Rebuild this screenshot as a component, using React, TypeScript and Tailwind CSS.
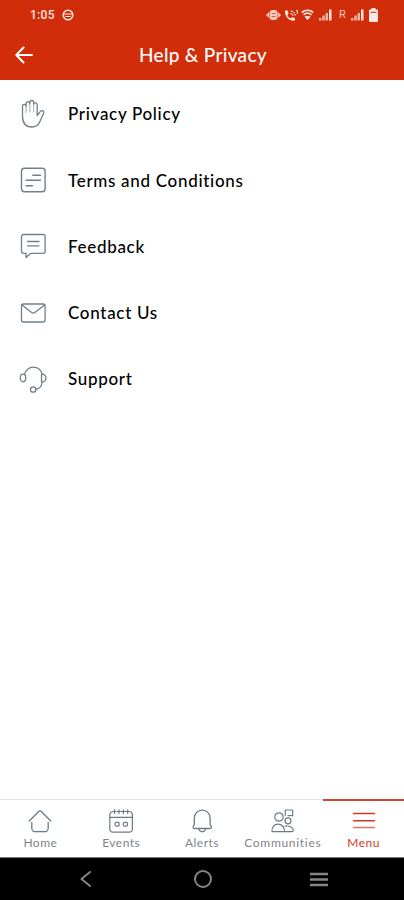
import type { ReactNode } from 'react';
import { clsx } from 'clsx';

interface MenuEntry {
  label: string;
  tracking: string;
  icon: ReactNode;
}

interface TabEntry {
  label: string;
  tracking: string;
  icon: ReactNode;
  active?: boolean;
}

const iconProps = {
  fill: 'none',
  stroke: 'currentColor',
  strokeLinecap: 'round',
  strokeLinejoin: 'round',
} as const;

function HandIcon() {
  return (
    <svg {...iconProps} viewBox="0 0 30 30" strokeWidth="1.3" className="size-[30px]">
      <path d="M4.5 17V7.2a1.8 1.8 0 0 1 3.6 0V4.8a1.9 1.9 0 0 1 3.8 0V3.4a1.9 1.9 0 0 1 3.8 0v1.8a1.8 1.8 0 0 1 3.5 0v11.3l3.2-4.1c1.4-1.5 4-.4 3.3 1.5l-4 9.1C20 27 17 28 13.8 28 8 28 4.500 24 4.500 17Z" />
      <path d="M8.100 7v6.500M11.900 5v8M15.700 5v8" strokeWidth="0.9" opacity="0.7" />
    </svg>
  );
}

function TermsIcon() {
  return (
    <svg {...iconProps} viewBox="0 0 30 30" strokeWidth="1.4" className="size-[30px]">
      <rect x="3.500" y="3.200" width="23.600" height="23.600" rx="3" />
      <path d="M14.800 10.300h7.700M8 15.300h14.500M8 20.700h6.500" />
    </svg>
  );
}

function FeedbackIcon() {
  return (
    <svg {...iconProps} viewBox="0 0 30 30" strokeWidth="1.3" className="size-[30px]">
      <path d="M5.500 3.500h19.600a2 2 0 0 1 2 2v14.800a2 2 0 0 1-2 2H12.800L8 26.500v-4.200H5.500a2 2 0 0 1-2-2V5.500a2 2 0 0 1 2-2Z" />
      <path d="M9.500 10.500h11.500M9.500 14.800h11.500" />
    </svg>
  );
}

function MailIcon() {
  return (
    <svg {...iconProps} viewBox="0 0 30 30" strokeWidth="1.3" className="size-[30px]">
      <rect x="3.500" y="6" width="23.600" height="18" rx="2" />
      <path d="m4 7 9.600 7.500a2.700 2.700 0 0 0 3.300 0L26.600 7" />
    </svg>
  );
}

function HeadsetIcon() {
  return (
    <svg {...iconProps} viewBox="0 0 30 30" strokeWidth="1.3" className="size-[30px]">
      <path d="M6.500 10.500C7.500 6.500 11 3.200 15.300 3.200s7.800 3 9 7.300" />
      <ellipse cx="5" cy="14" rx="2.700" ry="3.800" />
      <path d="M23.500 10.300c2.500-.5 4.500 1.200 4.500 3.800s-2 4.200-4.500 3.800Z" />
      <path d="M24.200 18c-.4 3.500-2.500 6.700-6 7.400" />
      <circle cx="15.200" cy="25.500" r="2.700" />
    </svg>
  );
}

function HomeIcon() {
  return (
    <svg {...iconProps} viewBox="0 0 26 26" strokeWidth="1.3" className="size-[26px]">
      <path d="M2.200 13 11.700 3.500a1.800 1.800 0 0 1 2.600 0L23.800 13" />
      <path d="M4.800 14.500v5.700a3.500 3.500 0 0 0 3.500 3.500h9.400a3.500 3.500 0 0 0 3.500-3.500v-5.700" />
    </svg>
  );
}

function CalendarIcon() {
  return (
    <svg {...iconProps} viewBox="0 0 26 26" strokeWidth="1.200" className="size-[26px]">
      <rect x="1.800" y="3.500" width="22.600" height="20.700" rx="3.500" />
      <path d="M2 9.300h22.300M6.500 1.800v3.800M11 1.800v3.800M15.300 1.800v3.800M19.700 1.800v3.800" />
      <rect x="7" y="14.300" width="4.200" height="3.800" rx="1.400" />
      <rect x="15.300" y="14.300" width="4.200" height="3.800" rx="1.400" />
    </svg>
  );
}

function AlertIcon() {
  return (
    <svg {...iconProps} viewBox="0 0 26 26" strokeWidth="1.300" className="size-[26px]">
      <path d="M5.300 16.500V10a7.900 7.900 0 0 1 15.800 0v6.500c0 .8 1.300 1.500 1.300 2.400 0 1-.8 1.600-1.800 1.600H5.800c-1 0-1.800-.6-1.800-1.600 0-.9 1.300-1.600 1.300-2.400Z" />
      <path d="M10 21a3.300 3.300 0 0 0 6.500 0" />
    </svg>
  );
}

function CommunityIcon() {
  return (
    <svg {...iconProps} viewBox="0 0 26 26" strokeWidth="1.200" className="size-[26px]">
      <circle cx="9" cy="9" r="4.200" />
      <path d="M15.300 7.300V2h7.400v5.700h-4.800" />
      <circle cx="18" cy="12.800" r="3" />
      <path d="M2 23.700c-.6-4.600 2.500-7.500 6-7.500 3.700 0 6.800 3 6.500 7.500Z" />
      <path d="M15 18.200c4-.8 8.300.8 8.300 4.300 0 .8-.5 1.200-1.300 1.200h-7.500" />
    </svg>
  );
}

function LinesIcon() {
  return (
    <svg {...iconProps} viewBox="0 0 26 26" strokeWidth="1.500" className="size-[26px]">
      <path d="M2.500 5.500h21M2.500 12.800h21" />
      <path d="M2.500 19.500h21" opacity="0.700" />
    </svg>
  );
}

function SignalIcon() {
  return (
    <svg viewBox="0 0 13 12" className="h-3 w-[13px] fill-current">
      <path d="M0 9h2.500v2.500H0zM3.400 6.500h2.300v5H3.400zM6.600 4h2.300v7.500H6.600z" opacity="0.750" />
      <path d="M10 .5h2.500v11H10z" />
    </svg>
  );
}

const menuEntries: MenuEntry[] = [
  { label: 'Privacy Policy', tracking: 'tracking-[0.690px]', icon: <HandIcon /> },
  { label: 'Terms and Conditions', tracking: 'tracking-[0.690px]', icon: <TermsIcon /> },
  { label: 'Feedback', tracking: 'tracking-[0.690px]', icon: <FeedbackIcon /> },
  { label: 'Contact Us', tracking: 'tracking-[0.690px]', icon: <MailIcon /> },
  { label: 'Support', tracking: 'tracking-[0.690px]', icon: <HeadsetIcon /> },
];

const tabs: TabEntry[] = [
  { label: 'Home', tracking: 'tracking-[0.500px]', icon: <HomeIcon /> },
  { label: 'Events', tracking: 'tracking-[0.500px]', icon: <CalendarIcon /> },
  { label: 'Alerts', tracking: 'tracking-[0.500px]', icon: <AlertIcon /> },
  { label: 'Communities', tracking: 'tracking-[0.700px]', icon: <CommunityIcon /> },
  { label: 'Menu', tracking: 'tracking-[0.500px]', icon: <LinesIcon />, active: true },
];

function StatusBar() {
  return (
    <div className="flex h-[30px] items-center pl-[30px] pr-[26px] text-[#ffe9e2]">
      <span className="w-[32px] font-[Roboto] text-[12px] font-medium tracking-[0.3px]">1:05</span>
      <svg viewBox="0 0 12 12" className="size-3 fill-none stroke-current">
        <circle cx="6" cy="6" r="4.700" strokeWidth="1.600" />
        <path d="M2 5h8M3.500 7.500h5" strokeWidth="1.200" />
      </svg>

      <div className="ml-auto flex items-center">
        <svg viewBox="0 0 15 12" className="h-3 w-[15px] fill-current">
          <path d="M0 6l3-3v6zM15 6l-3-3v6z" opacity="0.800" />
          <rect x="3.500" y="1" width="8" height="10" rx="3" opacity="0.850" />
          <path d="M5.500 4.500h4M5.500 7.500h4" className="stroke-[#d22d0a]" strokeWidth="0.700" />
        </svg>
        <svg viewBox="0 0 15 13" className="ml-[3px] h-[13px] w-[15px] fill-current">
          <path d="M1 1.500h2.600l1 3.200-1.300 1.500c.8 1.600 1.800 2.600 3.300 3.300L8 8.200l3 .9v2.500C5.500 12.500.500 7.500 1 1.500Z" />
          <path d="M6.500 2a4.800 4.800 0 0 1 4.700 4.800M6.500 4.500a2.300 2.300 0 0 1 2.300 2.300M12 2l1.300-.8V5" className="fill-none stroke-current" />
        </svg>
        <svg viewBox="0 0 13 12" className="ml-[2px] h-3 w-[13px] fill-none stroke-current">
          <path d="M.8 3.500c3.500-3 8-3 11.400 0M2.500 5.800c2.500-2 5.500-2 8 0" strokeWidth="1.700" />
          <path d="m4 7.700 2.500 3L9 7.700Z" className="fill-current" />
        </svg>
        <span className="ml-[5px]">
          <SignalIcon />
        </span>
        <span className="ml-[7px] w-[12px] font-[Roboto] text-[11px] leading-3 text-[#f8c5b7]">R</span>
        <SignalIcon />
        <svg viewBox="0 0 9 14" className="ml-[5px] h-[14px] w-[9px] fill-current">
          <path d="M2.500 0h4v1.500h1.500a1 1 0 0 1 1 1V13a1 1 0 0 1-1 1H1a1 1 0 0 1-1-1V2.500a1 1 0 0 1 1-1h1.500z" />
          <path d="M1.500 4.300h6" className="stroke-[#d22d0a]" />
        </svg>
      </div>
    </div>
  );
}

export default function App() {
  return (
    <div className="flex h-[900px] w-[404px] flex-col bg-white font-[Lato,sans-serif]">
      <header className="h-20 bg-[#d22d0a]">
        <StatusBar />
        <div className="flex h-[50px] items-center px-[15px] text-white">
          <svg {...iconProps} viewBox="0 0 18 18" strokeWidth="2" className="size-[18px]">
            <path d="M17 9H1.500M8.500 1.500 1.300 9l7.200 7.500" />
          </svg>
          <h1 className="flex-1 pr-[16px] text-center text-[19px] font-medium tracking-[0.3px]">
            Help &amp; Privacy
          </h1>
        </div>
      </header>

      <main className="flex-1 pt-px">
        {menuEntries.map((entry) => (
          <div key={entry.label} className="flex h-[66.200px] items-center pl-[18px]">
            <span className="text-[#70808a]">{entry.icon}</span>
            <span className={clsx('ml-5 text-[17px] font-medium text-black', entry.tracking)}>
              {entry.label}
            </span>
          </div>
        ))}
      </main>

      {/* Bottom tabs */}
      <nav className="flex h-[59px] border-b border-[#777]">
        {tabs.map((tab) => (
          <div
            key={tab.label}
            className={clsx(
              'flex flex-1 flex-col items-center',
              tab.active
                ? 'border-t-2 border-[#cf4630] pt-[7px] text-[#cf3a24]'
                : 'border-t border-[#e2e2e2] pt-2 text-[#6c7c87]',
            )}
          >
            {tab.icon}
            <span className={clsx('mt-px text-[12px] leading-4', tab.active ? 'text-[#d33b24]' : 'text-[#7f858a]', tab.tracking)}>
              {tab.label}
            </span>
          </div>
        ))}
      </nav>

      {/* System navigation */}
      <div className="flex h-[42px] items-center bg-black text-[#858585]">
        <svg {...iconProps} viewBox="0 0 18 18" strokeWidth="2" className="ml-[77px] size-[18px]">
          <path d="M13 2 4.500 9l8.500 7" />
        </svg>
        <svg {...iconProps} viewBox="0 0 20 20" strokeWidth="2" className="ml-[98px] size-5">
          <circle cx="10" cy="10" r="8" />
        </svg>
        <svg viewBox="0 0 18 18" strokeWidth="2.500" className="ml-[97px] size-[18px] stroke-current">
          <path d="M0 4h18M0 9.500h18M0 15h18" />
        </svg>
      </div>
    </div>
  );
}
